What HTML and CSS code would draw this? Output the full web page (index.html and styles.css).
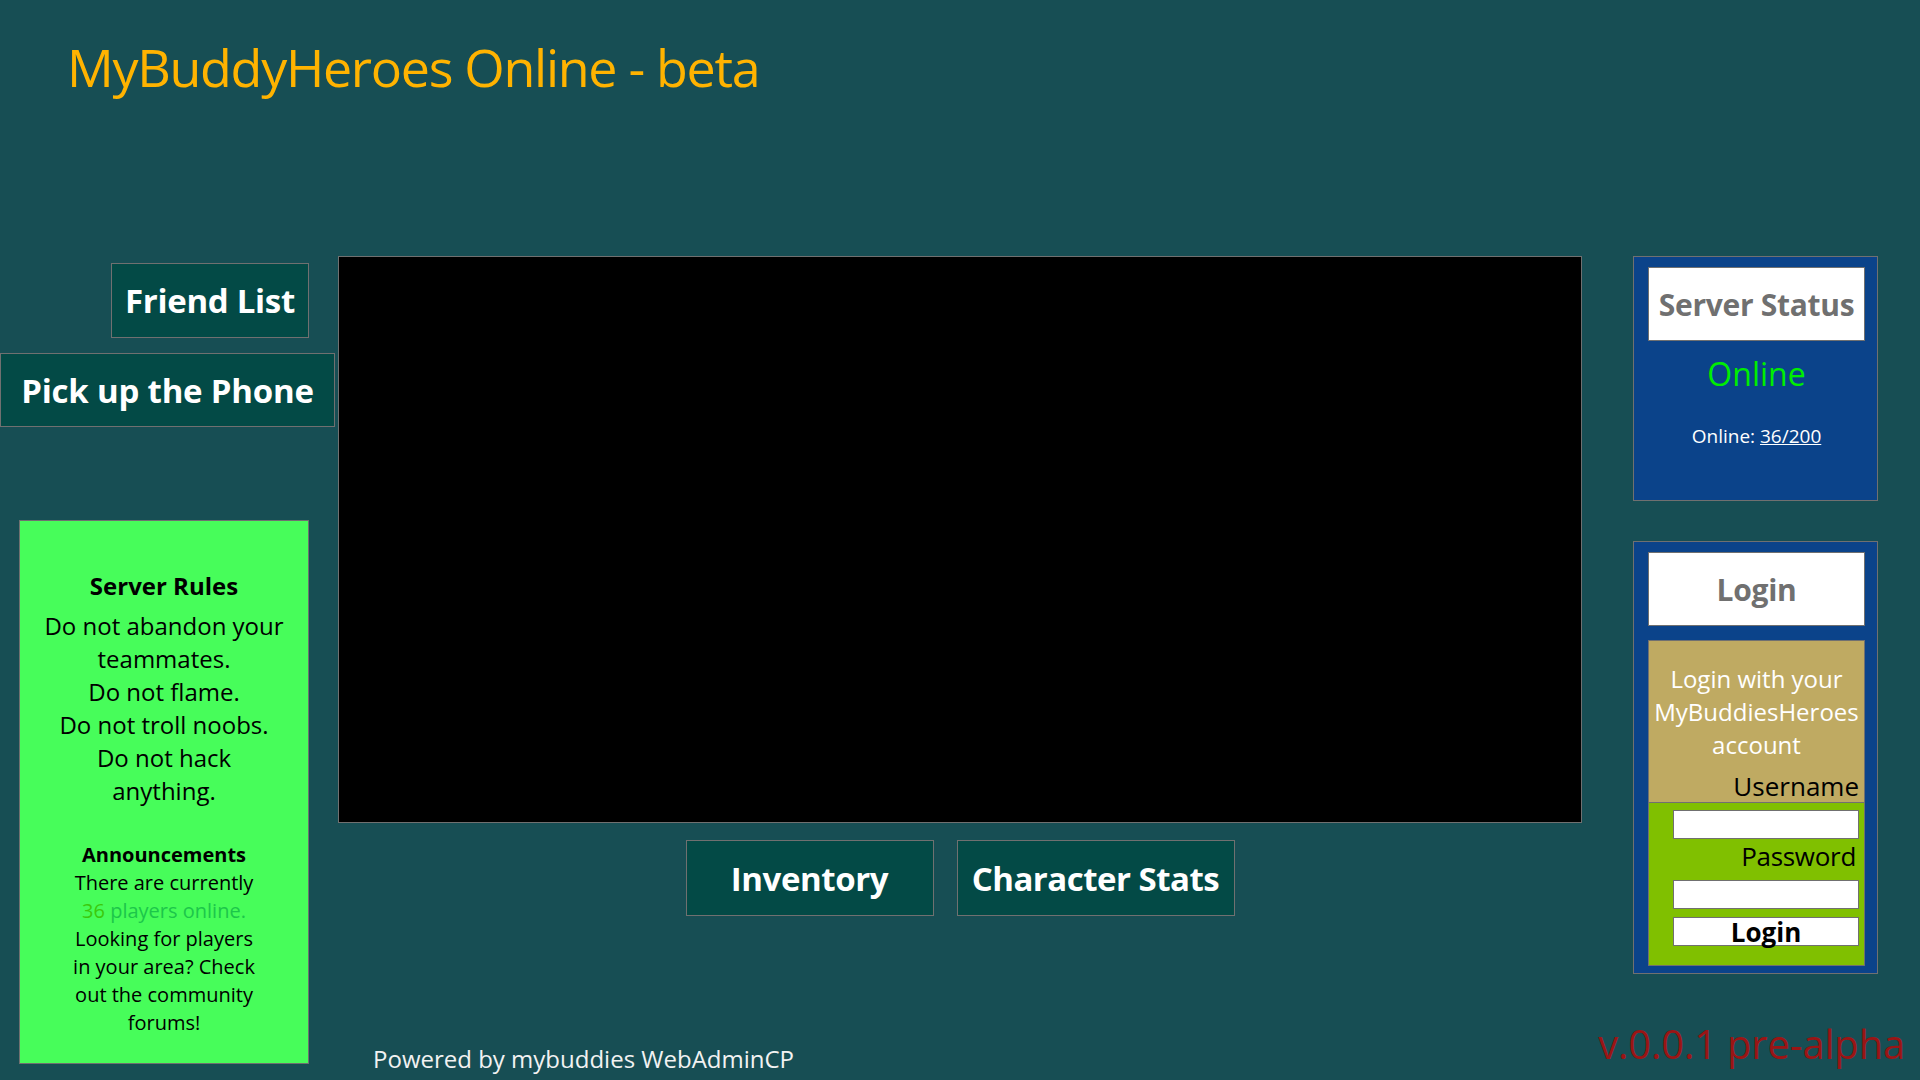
FILE: index.html
```html
<!DOCTYPE html>
<html lang="en">
<head>
<meta charset="utf-8">
<title>MyBuddyHeroes Online - beta</title>
<link rel="stylesheet" href="styles.css">
</head>
<body>
<header class="top">
  <h1 class="title">MyBuddyHeroes Online - beta</h1>
</header>
<main class="layout">
  <aside class="left">
    <button class="tile friend">Friend List</button>
    <button class="tile phone">Pick up the Phone</button>
    <section class="rules">
      <h2 class="rules-title">Server Rules</h2>
      <p class="rule-text">Do not abandon your<br>teammates.<br>Do not flame.<br>Do not troll noobs.<br>Do not hack<br>anything.</p>
      <h3 class="ann-title">Announcements</h3>
      <p class="ann">There are currently<br><span class="num">36</span> <span class="players">players online.</span><br>Looking for players<br>in your area? Check<br>out the community<br>forums!</p>
    </section>
  </aside>
  <section class="center">
    <div class="screen"></div>
    <div class="actions">
      <button class="tile inv">Inventory</button>
      <button class="tile stats">Character Stats</button>
    </div>
  </section>
  <aside class="right">
    <section class="panel status">
      <h2 class="panel-head">Server Status</h2>
      <p class="state">Online</p>
      <p class="count">Online: <a class="count-link" href="#">36/200</a></p>
    </section>
    <section class="panel login">
      <h2 class="panel-head">Login</h2>
      <form class="form">
        <div class="form-top">
          <p class="intro">Login with your<br>MyBuddiesHeroes<br>account</p>
          <label class="field-label user-label" for="user">Username</label>
        </div>
        <div class="form-bottom">
          <input class="field" id="user" type="text">
          <label class="field-label pass-label" for="pass">Password</label>
          <input class="field pass" id="pass" type="password">
          <button class="submit" type="button">Login</button>
        </div>
      </form>
    </section>
  </aside>
  <footer class="foot">
    <p class="powered">Powered by mybuddies WebAdminCP</p>
    <p class="version">v.0.0.1 pre-alpha</p>
  </footer>
</main>
</body>
</html>
```
FILE: styles.css
```css
html, body {
  margin: 0;
}
body {
  width: 1920px;
  height: 1080px;
  overflow: hidden;
  background: #174e54;
  font-family: "Open Sans", "Noto Sans", sans-serif;
  color: #fff;
}
.top {
  height: 256px;
  box-sizing: border-box;
  padding: 40px 0 0 67px;
}
.title {
  margin: 0;
  font-size: 52px;
  line-height: 54px;
  letter-spacing: -1.3px;
  font-weight: 400;
  color: #ffb300;
}
.layout {
  display: grid;
  grid-template-columns: 338px 1244px 338px;
  grid-template-rows: auto auto;
  align-items: start;
}
.left {
  grid-column: 1;
  grid-row: 1 / 3;
  display: flex;
  flex-direction: column;
  align-items: flex-start;
  padding-top: 7px;
}
.tile {
  font-family: inherit;
  background: #034a46;
  border: 1px solid #707070;
  color: #fff;
  font-weight: 700;
  padding: 0;
  box-sizing: border-box;
  white-space: nowrap;
}
.friend {
  margin-left: 111px;
  width: 198px;
  height: 75px;
  font-size: 33px;
  letter-spacing: -0.3px;
}
.phone {
  margin-top: 15px;
  width: 335px;
  height: 74px;
  font-size: 33px;
  letter-spacing: -0.2px;
}
.rules {
  margin: 93px 0 0 19px;
  width: 290px;
  height: 544px;
  box-sizing: border-box;
  background: #47fd5a;
  border: 1px solid #707070;
  text-align: center;
  padding-top: 49px;
  color: #000;
}
.rules-title {
  margin: 0;
  font-size: 24px;
  line-height: 32px;
  font-weight: 700;
}
.rule-text {
  margin: 7px 0 0;
  font-size: 24px;
  line-height: 33px;
}
.ann-title {
  margin: 34px 0 0;
  font-size: 20px;
  line-height: 28px;
  font-weight: 700;
}
.ann {
  margin: 0;
  font-size: 20px;
  line-height: 28px;
}
.num {
  color: #3cc80c;
}
.players {
  color: #1cc64a;
}
.center {
  grid-column: 2;
  grid-row: 1;
  display: flex;
  flex-direction: column;
  align-items: center;
}
.screen {
  width: 1244px;
  height: 567px;
  box-sizing: border-box;
  background: #000;
  border: 1px solid #707070;
}
.actions {
  display: flex;
  gap: 23px;
  margin-top: 17px;
}
.inv {
  width: 248px;
  height: 76px;
  font-size: 33px;
  letter-spacing: -0.4px;
}
.stats {
  width: 278px;
  height: 76px;
  font-size: 33px;
  letter-spacing: -0.5px;
}
.right {
  grid-column: 3;
  grid-row: 1;
  width: 245px;
  margin-left: 51px;
  display: flex;
  flex-direction: column;
  gap: 40px;
}
.panel {
  background: #0b438a;
  border: 1px solid #707070;
  box-sizing: border-box;
  padding: 10px 12px 0 14px;
}
.status {
  height: 245px;
}
.login {
  height: 433px;
}
.panel-head {
  margin: 0;
  height: 74px;
  box-sizing: border-box;
  background: #fff;
  border: 1px solid #707070;
  display: flex;
  align-items: center;
  justify-content: center;
  color: #707070;
  font-weight: 700;
  font-size: 30px;
  letter-spacing: -0.3px;
  white-space: nowrap;
}
.state {
  margin: 11px 0 0;
  text-align: center;
  color: #00ee00;
  font-size: 32px;
  line-height: 44px;
}
.count {
  margin: 26px 0 0;
  text-align: center;
  font-size: 19px;
  line-height: 28px;
  color: #fff;
}
.count-link {
  color: #fff;
}
.form {
  margin: 14px 0 0;
  border: 1px solid #707070;
}
.form-top {
  background: #bfaa62;
  height: 162px;
  box-sizing: border-box;
  border-bottom: 1px solid #707070;
  padding-top: 21px;
  text-align: center;
}
.intro {
  margin: 0;
  font-size: 24px;
  line-height: 33px;
  color: #fff;
}
.field-label {
  display: block;
  text-align: right;
  color: #000;
  font-size: 26px;
  line-height: 34px;
}
.user-label {
  margin-top: 8px;
  padding-right: 5px;
}
.pass-label {
  padding-right: 3px;
  letter-spacing: -0.3px;
}
.form-bottom {
  background: #80c000;
  height: 162px;
  box-sizing: border-box;
  padding: 7px 5px 0 24px;
  display: flex;
  flex-direction: column;
}
.field {
  display: block;
  height: 29px;
  box-sizing: border-box;
  border: 1px solid #707070;
  background: #fff;
  margin: 0;
  padding: 0 4px;
  width: 100%;
}
.pass {
  margin-top: 7px;
}
.submit {
  margin-top: 8px;
  height: 29px;
  width: 100%;
  box-sizing: border-box;
  border: 1px solid #707070;
  background: #fff;
  color: #000;
  font-family: inherit;
  font-weight: 700;
  font-size: 26px;
  line-height: 26px;
  padding: 0;
}
.foot {
  grid-column: 2 / 4;
  grid-row: 2;
  display: flex;
  justify-content: space-between;
  align-items: flex-start;
  padding: 0 15px 0 35px;
}
.powered {
  margin: 69px 0 0;
  font-size: 24px;
  line-height: 32px;
  color: #f2f2f2;
}
.version {
  margin: 45px 0 0;
  font-size: 40px;
  line-height: 50px;
  letter-spacing: -0.2px;
  color: #9a1515;
}
```
